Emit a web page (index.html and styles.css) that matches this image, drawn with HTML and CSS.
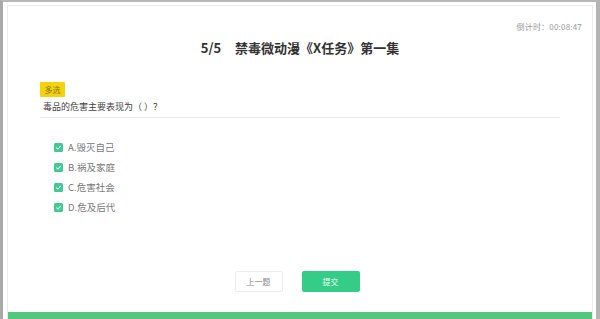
FILE: index.html
```html
<!DOCTYPE html>
<html lang="zh">
<head>
<meta charset="utf-8">
<link rel="stylesheet" href="styles.css">
</head>
<body>
<div class="frame">
  <div class="panel">
    <div class="timer">倒计时：00:08:47</div>
    <h1 class="title"><span class="num">5/5</span>禁毒微动漫《X任务》第一集</h1>
    <div class="content">
      <span class="badge">多选</span>
      <p class="question">毒品的危害主要表现为（ ）？</p>
      <div class="divider"></div>
      <ul class="options">
        <li class="option"><span class="check"><svg viewBox="0 0 10 10" width="7" height="7"><path d="M2 5.2 L4.2 7.2 L8 3" fill="none" stroke="#fff" stroke-width="1.6"/></svg></span>A.毁灭自己</li>
        <li class="option"><span class="check"><svg viewBox="0 0 10 10" width="7" height="7"><path d="M2 5.2 L4.2 7.2 L8 3" fill="none" stroke="#fff" stroke-width="1.6"/></svg></span>B.祸及家庭</li>
        <li class="option"><span class="check"><svg viewBox="0 0 10 10" width="7" height="7"><path d="M2 5.2 L4.2 7.2 L8 3" fill="none" stroke="#fff" stroke-width="1.6"/></svg></span>C.危害社会</li>
        <li class="option"><span class="check"><svg viewBox="0 0 10 10" width="7" height="7"><path d="M2 5.2 L4.2 7.2 L8 3" fill="none" stroke="#fff" stroke-width="1.6"/></svg></span>D.危及后代</li>
      </ul>
    </div>
    <div class="actions">
      <button class="btn btn-prev">上一题</button>
      <button class="btn btn-submit">提交</button>
    </div>
    <div class="bar"></div>
  </div>
</div>
</body>
</html>
```

FILE: styles.css
```css
* { box-sizing: border-box; }
html, body { margin: 0; padding: 0; }
body {
  background: #fff;
  font-family: "Noto Sans CJK SC", "Noto Sans", sans-serif;
  width: 600px;
  height: 319px;
  overflow: hidden;
}
.frame {
  height: 319px;
  overflow: hidden;
  border-top: 2px solid #b8b8b8;
  border-left: 3px solid #a9a9a9;
  border-right: 4px solid #b4b4b4;
  padding: 3px 3px 0 4px;
}
.panel {
  height: 330px;
  border: 1px solid #ececec;
  display: flex;
  flex-direction: column;
}
.timer {
  align-self: flex-end;
  margin: 16px 10px 0 0;
  font-size: 8px;
  line-height: 10px;
  letter-spacing: 0.2px;
  color: #9a9a9a;
}
.title {
  margin: 8px 0 0;
  text-align: center;
  font-size: 13px;
  line-height: 16px;
  font-weight: 700;
  color: #333;
}
.num { margin-right: 14px; }
.content {
  padding: 0 32px;
  margin-top: 26px;
  display: flex;
  flex-direction: column;
  align-items: flex-start;
}
.badge {
  display: block;
  width: 25px;
  height: 15px;
  background: #f4d20c;
  color: #8c7a2a;
  font-size: 8px;
  line-height: 15px;
  text-align: center;
  border-radius: 1px;
}
.question {
  margin: 4px 0 0 3px;
  font-size: 9px;
  line-height: 12px;
  color: #444;
}
.divider {
  margin-top: 4px;
  align-self: stretch;
  height: 1px;
  background: #e8e8e8;
}
.options {
  list-style: none;
  margin: 19px 0 0 14px;
  padding: 0;
}
.option {
  display: flex;
  align-items: center;
  height: 20px;
  font-size: 9.5px;
  color: #777;
}
.check {
  width: 9px;
  height: 9px;
  border-radius: 1.5px;
  background: #3ccb90;
  display: flex;
  align-items: center;
  justify-content: center;
  margin-right: 5px;
}
.actions {
  margin-top: 54px;
  display: flex;
  justify-content: center;
  gap: 19px;
  padding-right: 6px;
}
.btn {
  font-family: inherit;
  font-size: 8px;
  height: 21px;
  border-radius: 2px;
  padding: 0;
}
.btn-prev {
  width: 48px;
  background: #fff;
  border: 1px solid #ececec;
  color: #888;
}
.btn-submit {
  width: 58px;
  background: #34cc87;
  border: none;
  color: #e8fff3;
}
.bar {
  margin-top: 20px;
  height: 12px;
  background: #52c87e;
}
```
